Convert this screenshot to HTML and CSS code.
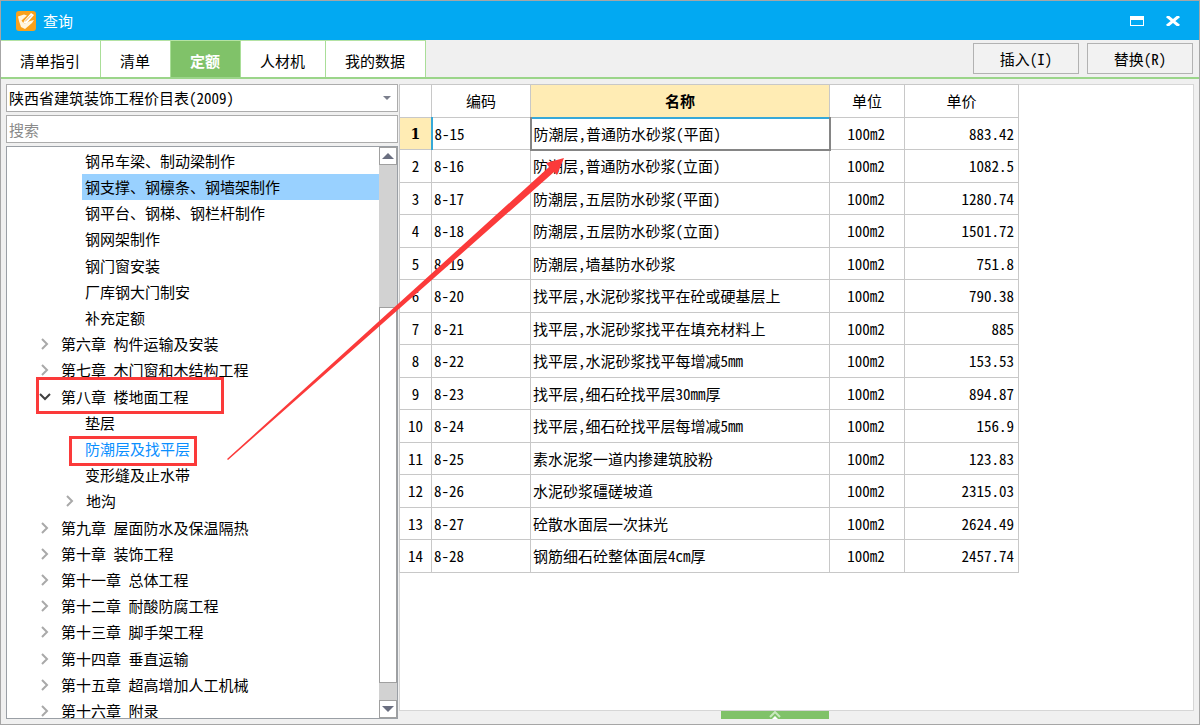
FILE: index.html
```html
<!DOCTYPE html>
<html lang="zh-CN">
<head>
<meta charset="utf-8">
<title>查询</title>
<link rel="stylesheet" href="styles.css">
</head>
<body>
<div class="window">
  <header class="titlebar">
    <svg class="logo" viewBox="0 0 20 20" width="20" height="20" aria-hidden="true">
      <rect width="20" height="20" rx="3" fill="#f9a11b"/>
      <path d="M2 5.500 8 3.500l3 1-5.500 5L8 13l6-3 4-1-2 3-7 6-4-2-2-6z" fill="#fff6e0"/>
      <path d="M8 10l7-8 3 2-7 8-4 1z" fill="#fff"/>
      <path d="M9 10.500l6-6" stroke="#f3b257" stroke-width="1"/>
    </svg>
    <h1 class="title">查询</h1>
    <button class="win-btn" aria-label="最大化"><svg width="14" height="10" viewBox="0 0 14 10"><path d="M0 0h14v10H0zM1 4v5h12V4z" fill="#fff" fill-rule="evenodd"/></svg></button>
    <button class="win-btn" aria-label="关闭"><svg width="14" height="10" viewBox="0 0 14 10"><path d="M1 0l12 10M13 0L1 10" stroke="#fff" stroke-width="3"/></svg></button>
  </header>
  <div class="toolbar">
    <nav class="tabs">
      <button class="tab">清单指引</button>
      <button class="tab">清单</button>
      <button class="tab active">定额</button>
      <button class="tab">人材机</button>
      <button class="tab">我的数据</button>
    </nav>
    <button class="action">插入(I)</button>
    <button class="action">替换(R)</button>
  </div>
  <main class="content">
    <aside class="side">
      <div class="combo">
        <select class="field" aria-label="定额库"><option>陕西省建筑装饰工程价目表(2009)</option></select>
        <svg class="combo-arrow" width="8" height="4" viewBox="0 0 8 4"><path d="M0 0h8L4 4z" fill="#7b7f8c"/></svg>
      </div>
      <input class="field" type="text" placeholder="搜索" aria-label="搜索">
      <div class="tree-box">
        <ul class="tree">
          <li class="node leaf">钢吊车梁、制动梁制作</li>
          <li class="node leaf"><span class="selected">钢支撑、钢檩条、钢墙架制作</span></li>
          <li class="node leaf">钢平台、钢梯、钢栏杆制作</li>
          <li class="node leaf">钢网架制作</li>
          <li class="node leaf">钢门窗安装</li>
          <li class="node leaf">厂库钢大门制安</li>
          <li class="node leaf">补充定额</li>
          <li class="node"><button class="twist" aria-label="展开"><svg width="8" height="12" viewBox="0 0 8 12"><path d="M1 1l5 5-5 5"/></svg></button>第六章 构件运输及安装</li>
          <li class="node"><button class="twist" aria-label="展开"><svg width="8" height="12" viewBox="0 0 8 12"><path d="M1 1l5 5-5 5"/></svg></button>第七章 木门窗和木结构工程</li>
          <li class="node"><button class="twist open" aria-label="折叠"><svg width="12" height="8" viewBox="0 0 12 8"><path d="M1 1l5 5 5-5"/></svg></button>第八章 楼地面工程</li>
          <li class="node leaf">垫层</li>
          <li class="node leaf current">防潮层及找平层</li>
          <li class="node leaf">变形缝及止水带</li>
          <li class="node sub"><button class="twist" aria-label="展开"><svg width="8" height="12" viewBox="0 0 8 12"><path d="M1 1l5 5-5 5"/></svg></button>地沟</li>
          <li class="node"><button class="twist" aria-label="展开"><svg width="8" height="12" viewBox="0 0 8 12"><path d="M1 1l5 5-5 5"/></svg></button>第九章 屋面防水及保温隔热</li>
          <li class="node"><button class="twist" aria-label="展开"><svg width="8" height="12" viewBox="0 0 8 12"><path d="M1 1l5 5-5 5"/></svg></button>第十章 装饰工程</li>
          <li class="node"><button class="twist" aria-label="展开"><svg width="8" height="12" viewBox="0 0 8 12"><path d="M1 1l5 5-5 5"/></svg></button>第十一章 总体工程</li>
          <li class="node"><button class="twist" aria-label="展开"><svg width="8" height="12" viewBox="0 0 8 12"><path d="M1 1l5 5-5 5"/></svg></button>第十二章 耐酸防腐工程</li>
          <li class="node"><button class="twist" aria-label="展开"><svg width="8" height="12" viewBox="0 0 8 12"><path d="M1 1l5 5-5 5"/></svg></button>第十三章 脚手架工程</li>
          <li class="node"><button class="twist" aria-label="展开"><svg width="8" height="12" viewBox="0 0 8 12"><path d="M1 1l5 5-5 5"/></svg></button>第十四章 垂直运输</li>
          <li class="node"><button class="twist" aria-label="展开"><svg width="8" height="12" viewBox="0 0 8 12"><path d="M1 1l5 5-5 5"/></svg></button>第十五章 超高增加人工机械</li>
          <li class="node"><button class="twist" aria-label="展开"><svg width="8" height="12" viewBox="0 0 8 12"><path d="M1 1l5 5-5 5"/></svg></button>第十六章 附录</li>
        </ul>
        <div class="scroll">
          <button class="scroll-btn" aria-label="向上"><svg width="12" height="6" viewBox="0 0 12 6"><path d="M0 6h12L6 0z" fill="#6a6f80"/></svg></button>
          <div class="track-above"></div>
          <div class="thumb"></div>
          <div class="track-below"></div>
          <button class="scroll-btn" aria-label="向下"><svg width="12" height="6" viewBox="0 0 12 6"><path d="M0 0h12L6 6z" fill="#6a6f80"/></svg></button>
        </div>
      </div>
    </aside>
    <section class="main-pane">
      <div class="grid-box">
        <table class="grid">
          <colgroup><col class="c-no"><col class="c-code"><col class="c-name"><col class="c-unit"><col class="c-price"></colgroup>
          <thead><tr><th></th><th>编码</th><th class="hot">名称</th><th>单位</th><th>单价</th></tr></thead>
          <tbody>
            <tr><th class="hot first">1</th><td>8-15</td><td class="focus">防潮层,普通防水砂浆(平面)</td><td>100m2</td><td>883.42</td></tr>
            <tr><th>2</th><td>8-16</td><td>防潮层,普通防水砂浆(立面)</td><td>100m2</td><td>1082.5</td></tr>
            <tr><th>3</th><td>8-17</td><td>防潮层,五层防水砂浆(平面)</td><td>100m2</td><td>1280.74</td></tr>
            <tr><th>4</th><td>8-18</td><td>防潮层,五层防水砂浆(立面)</td><td>100m2</td><td>1501.72</td></tr>
            <tr><th>5</th><td>8-19</td><td>防潮层,墙基防水砂浆</td><td>100m2</td><td>751.8</td></tr>
            <tr><th>6</th><td>8-20</td><td>找平层,水泥砂浆找平在砼或硬基层上</td><td>100m2</td><td>790.38</td></tr>
            <tr><th>7</th><td>8-21</td><td>找平层,水泥砂浆找平在填充材料上</td><td>100m2</td><td>885</td></tr>
            <tr><th>8</th><td>8-22</td><td>找平层,水泥砂浆找平每增减5mm</td><td>100m2</td><td>153.53</td></tr>
            <tr><th>9</th><td>8-23</td><td>找平层,细石砼找平层30mm厚</td><td>100m2</td><td>894.87</td></tr>
            <tr><th>10</th><td>8-24</td><td>找平层,细石砼找平层每增减5mm</td><td>100m2</td><td>156.9</td></tr>
            <tr><th>11</th><td>8-25</td><td>素水泥浆一道内掺建筑胶粉</td><td>100m2</td><td>123.83</td></tr>
            <tr><th>12</th><td>8-26</td><td>水泥砂浆礓磋坡道</td><td>100m2</td><td>2315.03</td></tr>
            <tr><th>13</th><td>8-27</td><td>砼散水面层一次抹光</td><td>100m2</td><td>2624.49</td></tr>
            <tr><th>14</th><td>8-28</td><td>钢筋细石砼整体面层4cm厚</td><td>100m2</td><td>2457.74</td></tr>
          </tbody>
        </table>
      </div>
      <button class="drawer" aria-label="展开面板"><svg width="12" height="8" viewBox="0 0 12 8"><path d="M3 8l3-3 3 3z" fill="#fff"/><path d="M1 6l5-5 5 5" fill="none" stroke="#c9e8be" stroke-width="2"/></svg></button>
    </section>
  </main>
  <svg class="marks" width="1200" height="725" viewBox="0 0 1200 725" aria-hidden="true">
    <path d="M37.500 378.500H222.500V412.500H37.500zM70.500 437.500H195.500V464.500H70.500z" fill="none" stroke="#fb3a3a" stroke-width="3"/>
    <path d="M227 459L549 167l-3-4 18-5-7 17-3-3L228 460z" fill="#fb3a3a"/>
  </svg>
</div>
</body>
</html>
```
FILE: styles.css
```css
* { box-sizing: border-box; }
body {
  margin: 0;
  color: #000;
  font-family: "Noto Sans CJK SC", sans-serif;
  font-size: 15px;
  line-height: 20px;
  font-feature-settings: "hwid";
}
button, select, input {
  margin: 0;
  padding: 0;
  border: 0;
  border-radius: 0;
  background: none;
  color: inherit;
  font: inherit;
  font-feature-settings: inherit;
}
.window {
  position: relative;
  display: flex;
  flex-direction: column;
  height: 100vh;
  border: 1px solid #a6a6a6;
  background: #f0f0f0;
  overflow: hidden;
}
.titlebar {
  display: flex;
  align-items: center;
  flex: none;
  height: 39px;
  padding: 0 19px 0 15px;
  background: #02a9f2;
  color: #fff;
}
.title { flex: 1; margin: 0 0 0 7px; font-size: 15px; font-weight: 400; }
.win-btn { display: flex; justify-content: center; width: 14px; margin-left: 22px; }
.toolbar {
  display: flex;
  align-items: center;
  flex: none;
  gap: 8px;
  height: 39px;
  padding-right: 6px;
  border-bottom: 2px solid #9bd58a;
}
.tabs { display: flex; align-self: stretch; margin-right: auto; }
.tab {
  padding: 4px 20px 0 19px;
  border-top: 1px solid #b4e2a4;
  border-right: 1px solid #a9de98;
  background: #fff;
}
.tab.active { background: #80c269; color: #fff; font-weight: 700; }
.action { width: 106px; height: 31px; border: 1px solid #b2b2b2; background: #f2f2f2; }
.content { display: flex; flex: 1; min-height: 0; padding: 5px; }
.side { display: flex; flex-direction: column; flex: none; gap: 3px; width: 392px; margin-right: 1px; }
.combo { display: grid; align-items: center; }
.combo > * { grid-area: 1 / 1; }
.combo-arrow { justify-self: end; margin-right: 7px; pointer-events: none; }
.field {
  width: 100%;
  height: 28px;
  padding: 0 2px;
  border: 1px solid #acacac;
  background: #fff;
  appearance: none;
}
.field::placeholder { color: #8a8a8a; opacity: 1; }
.tree-box {
  display: flex;
  flex: 1;
  min-height: 0;
  border: 1px solid #9a9fa5;
  background: #fff;
  overflow: hidden;
}
.tree { flex: 1; margin: 0; padding: 1px 0 0; list-style: none; }
.node { display: flex; align-items: center; height: 26px; padding-left: 29px; white-space: pre; }
.node:nth-child(5n) { height: 27px; }
.leaf { padding-left: 78px; }
.sub { padding-left: 54px; }
.selected { flex: 1; margin-left: -3px; padding: 3px; background: #99d1ff; }
.current { color: #0a8fff; }
.twist { display: flex; justify-content: center; width: 18px; margin-right: 7px; }
.twist path { fill: none; stroke: #a9a9a9; stroke-width: 2; }
.twist.open path { stroke: #404040; }
.scroll { display: flex; flex-direction: column; flex: none; width: 18px; background: #d2d2d2; }
.scroll-btn {
  display: flex;
  align-items: center;
  justify-content: center;
  height: 18px;
  border: 1px solid #a0a0a0;
  background: #fff;
}
.track-above { flex: 143; }
.thumb { flex: 375; border: 1px solid #a0a0a0; background: #fff; }
.track-below { flex: 17; }
.main-pane { display: flex; flex: 1; flex-direction: column; min-width: 0; }
.grid-box { flex: 1; min-height: 0; border: 1px solid #d6d6d6; background: #fff; }
.grid { width: 619px; border-collapse: collapse; table-layout: fixed; margin: -1px 0 0 -1px; }
.c-no { width: 32px; }
.c-code { width: 99px; }
.c-name { width: 299px; }
.c-unit { width: 75px; }
.c-price { width: 114px; }
.grid tr { height: 32px; }
.grid thead tr, .grid tbody tr:nth-child(even) { height: 33px; }
.grid th, .grid td { padding: 0 2px; border: 1px solid #c8c8c8; font-weight: 400; white-space: nowrap; }
.grid th.hot { background: #ffecb4; font-weight: 700; }
.grid th.first { border-right: 2px solid #36a8d8; font-family: "DejaVu Serif", serif; font-size: 14px; }
.grid td:nth-child(4) { padding-right: 4px; text-align: center; }
.grid td:nth-child(5) { padding-right: 4px; text-align: right; }
.grid .focus { border: 2px solid #858585; border-top-color: #36a8d8; }
.drawer {
  display: flex;
  align-items: center;
  justify-content: center;
  align-self: center;
  flex: none;
  width: 108px;
  height: 8px;
  margin-right: 44px;
  background: #80c269;
}
.marks { position: absolute; top: -1px; left: -1px; pointer-events: none; }
```
